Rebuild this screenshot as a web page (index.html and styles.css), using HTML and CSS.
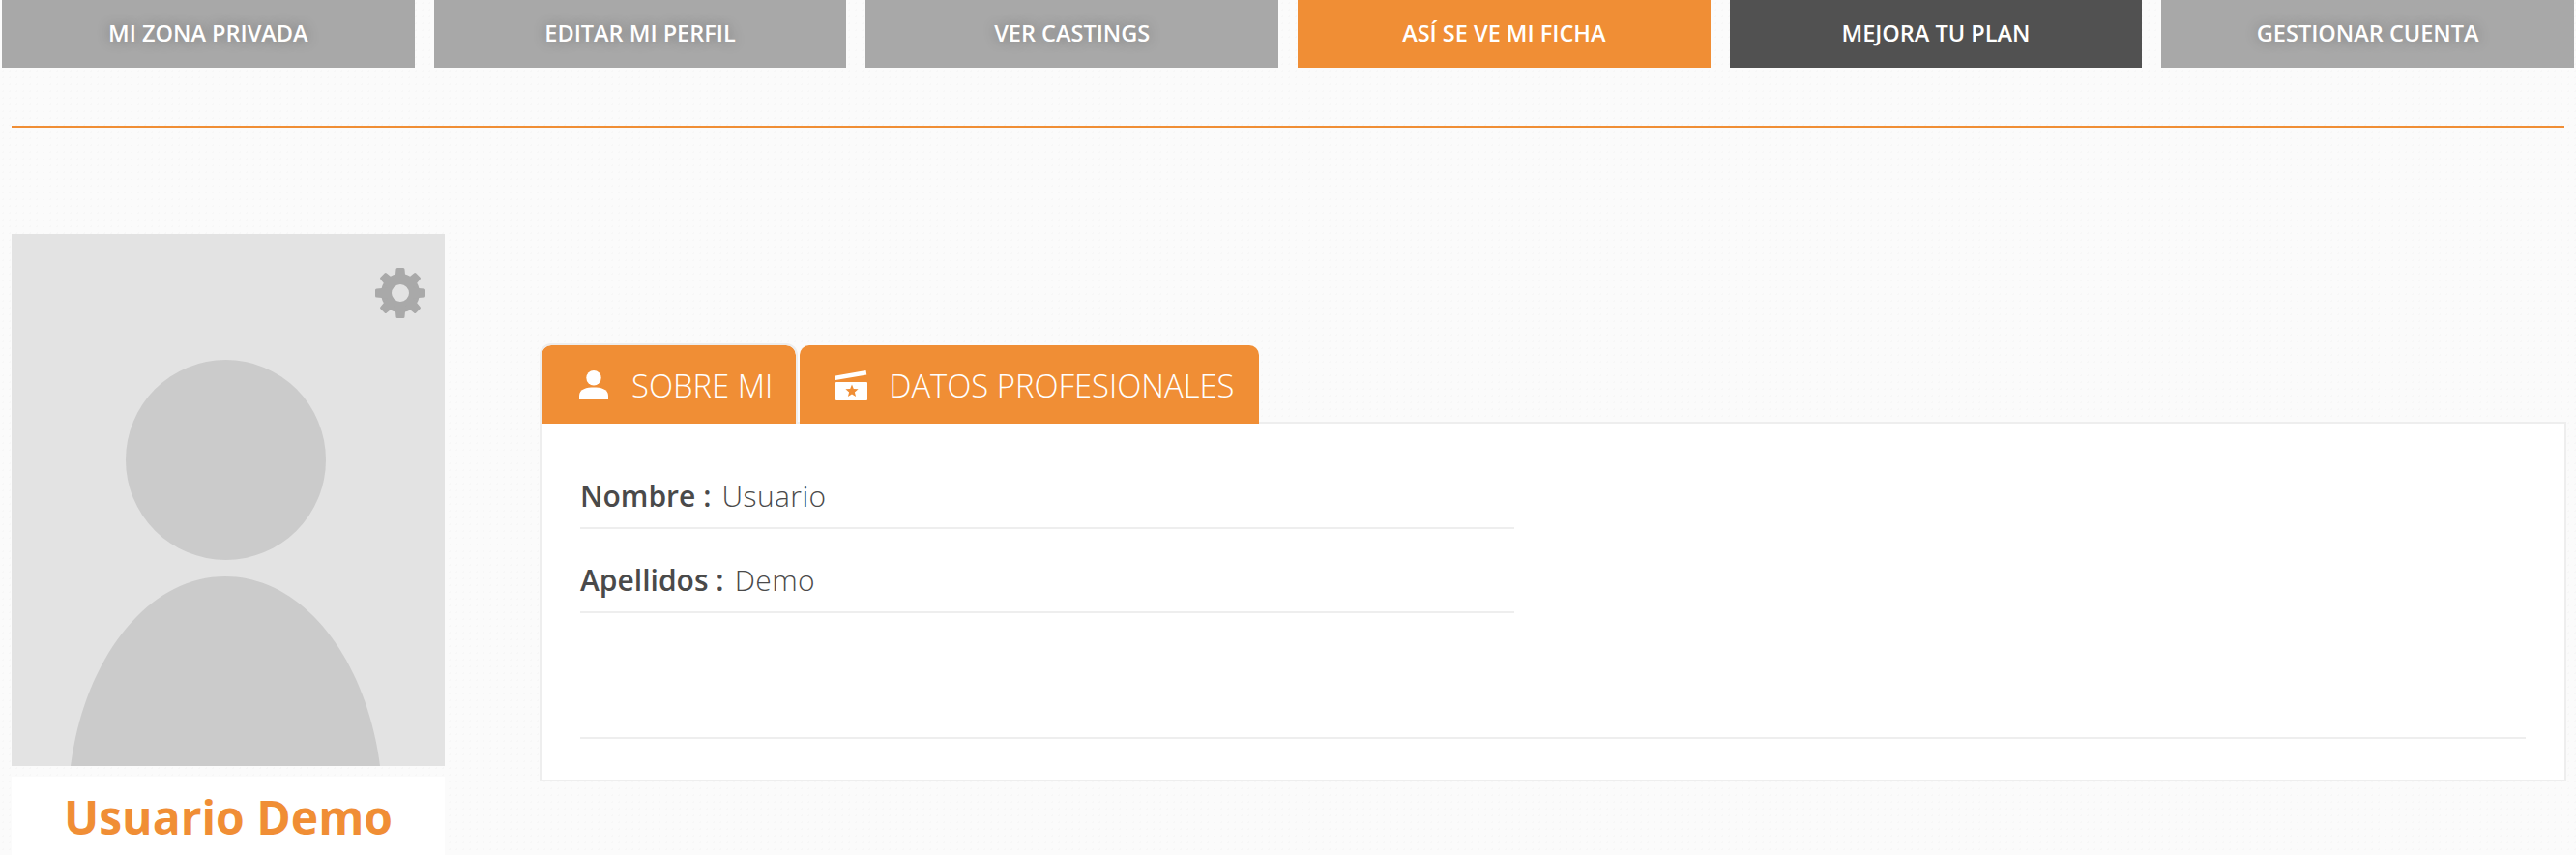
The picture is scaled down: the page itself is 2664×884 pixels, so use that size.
FILE: index.html
```html
<!DOCTYPE html>
<html lang="es">

<head>
  <meta charset="UTF-8">
  <meta name="viewport" content="width=device-width, initial-scale=1.0">
  <title>Mi ficha</title>
  <link rel="stylesheet" href="styles.css">
</head>

<body>
  <nav class="menu">
    <a class="menu-item">MI ZONA PRIVADA</a>
    <a class="menu-item">EDITAR MI PERFIL</a>
    <a class="menu-item">VER CASTINGS</a>
    <a class="menu-item menu-item-active">ASÍ SE VE MI FICHA</a>
    <a class="menu-item menu-item-dark">MEJORA TU PLAN</a>
    <a class="menu-item">GESTIONAR CUENTA</a>
  </nav>
  <hr class="menu-line">

  <main class="profile">
    <aside class="sidebar">
      <div class="photo">
        <svg class="avatar" viewBox="0 0 448 550" width="448" height="550">
          <circle cx="221.5" cy="233.5" r="103.5" fill="#cbcbcb" />
          <path d="M61 550C75 440 140 354 221 354S367 440 381 550Z" fill="#cbcbcb" />
        </svg>
        <svg class="gear" viewBox="0 0 52 52" width="52" height="52">
          <circle cx="26" cy="26" r="14.5" fill="none" stroke="#a9a9a9" stroke-width="11" />
          <g fill="#a9a9a9">
            <path d="M21.5 1.5q0-1.5 1.5-1.5h6q1.5 0 1.5 1.5l1 11h-11z" />
            <path transform="rotate(45 26 26)" d="M21.5 1.5q0-1.5 1.5-1.5h6q1.5 0 1.5 1.5l1 11h-11z" />
            <path transform="rotate(90 26 26)" d="M21.5 1.5q0-1.5 1.5-1.5h6q1.5 0 1.5 1.5l1 11h-11z" />
            <path transform="rotate(135 26 26)" d="M21.5 1.5q0-1.5 1.5-1.5h6q1.5 0 1.5 1.5l1 11h-11z" />
            <path transform="rotate(180 26 26)" d="M21.5 1.5q0-1.5 1.5-1.5h6q1.5 0 1.5 1.5l1 11h-11z" />
            <path transform="rotate(225 26 26)" d="M21.5 1.5q0-1.5 1.5-1.5h6q1.5 0 1.5 1.5l1 11h-11z" />
            <path transform="rotate(270 26 26)" d="M21.5 1.5q0-1.5 1.5-1.5h6q1.5 0 1.5 1.5l1 11h-11z" />
            <path transform="rotate(315 26 26)" d="M21.5 1.5q0-1.5 1.5-1.5h6q1.5 0 1.5 1.5l1 11h-11z" />
          </g>
        </svg>
      </div>
      <h2 class="name">Usuario Demo</h2>
    </aside>

    <section class="details">
      <div class="tabs">
        <a class="tab tab-active">
          <svg class="tab-icon" viewBox="0 0 30 30" width="30" height="30">
            <circle cx="15" cy="7.7" r="7.7" fill="#fff" />
            <path d="M0 30v-4c0-7 8-8.5 15-8.5s15 1.5 15 8.5v4z" fill="#fff" />
          </svg>
          SOBRE MI
        </a>
        <a class="tab">
          <svg class="tab-icon" viewBox="0 0 33 31" width="33" height="31">
            <path d="M0 5.5L31.5 0l.8 4.5L0 10z" fill="#fff" />
            <rect y="12" width="33" height="19" rx="1" fill="#fff" />
            <path d="M17 14.5l1.800 4.500 4.800.3-3.700 3.100 1.200 4.700-4.100-2.600-4.100 2.600 1.200-4.700-3.700-3.100 4.800-.3z" fill="#f08e35" />
          </svg>
          DATOS PROFESIONALES
        </a>
      </div>
      <div class="panel">
        <p class="row"><b>Nombre :</b> Usuario</p>
        <p class="row"><b>Apellidos :</b> Demo</p>
        <hr class="panel-line">
      </div>
    </section>
  </main>
</body>

</html>
```

FILE: styles.css
```css
* {
  margin: 0;
  padding: 0;
  box-sizing: border-box;
}

body {
  height: 884px;
  overflow: hidden;
  font-family: "Open Sans", sans-serif;
  color: #4a4a4a;
  background-color: #fbfbfb;
  background-image: radial-gradient(#f7f7f7 1px, transparent 1px);
  background-size: 7px 7px;
}

/* Menu */
.menu {
  display: flex;
  gap: 20px;
  padding: 0 2px;
}

.menu-item {
  flex: 1;
  height: 70px;
  line-height: 68px;
  text-align: center;
  font-size: 23.5px;
  font-weight: 600;
  color: #fff;
  background-color: #a8a8a8;
  text-shadow: 0 0 14px rgba(0, 0, 0, 0.3);
}

.menu-item-active {
  background-color: #f08e35;
  text-shadow: none;
}

.menu-item-dark {
  background-color: #515151;
  text-shadow: none;
}

.menu-line {
  height: 2px;
  margin: 60px 12px 0;
  border: 0;
  background-color: #f08e35;
}

/* Perfil */
.profile {
  display: flex;
  gap: 98px;
  margin: 110px 10px 0 12px;
}

.sidebar {
  flex: 0 0 448px;
}

.photo {
  position: relative;
  height: 550px;
  background-color: #e3e3e3;
}

.avatar {
  display: block;
}

.gear {
  position: absolute;
  top: 35px;
  left: 376px;
}

.name {
  margin-top: 11px;
  height: 120px;
  padding-top: 9px;
  text-align: center;
  font-size: 48px;
  font-weight: 700;
  color: #f08e35;
  background-color: #fff;
}

.details {
  flex: 1;
  margin-top: 113px;
}

/* Pestañas */
.tabs {
  position: relative;
  z-index: 1;
  display: flex;
  height: 83px;
  margin-bottom: -2px;
}

.tab {
  display: flex;
  align-items: center;
  gap: 24px;
  padding: 1px 24px 0 39px;
  font-size: 32.8px;
  font-weight: 300;
  color: #fff;
  background-color: #f08e35;
  background-clip: padding-box;
  border: 2px solid transparent;
  border-bottom: 0;
  border-radius: 12px 12px 0 0;
}

.tab-active {
  border-color: #eee;
}

.tab-icon {
  flex-shrink: 0;
}

.tab:last-child {
  gap: 22px;
  padding: 1px 26px 0 37px;
}

.panel {
  height: 372px;
  padding: 22px 40px 0;
  background-color: #fff;
  border: 2px solid #eee;
}

.row {
  width: 966px;
  height: 87px;
  padding-top: 33px;
  font-size: 30px;
  font-weight: 300;
  line-height: 40px;
  letter-spacing: 0.4px;
  border-bottom: 2px solid #eee;
}

.row b {
  margin-right: 3px;
  font-weight: 600;
  letter-spacing: 0;
}

.panel-line {
  height: 2px;
  margin-top: 128px;
  border: 0;
  background-color: #eee;
}
```
